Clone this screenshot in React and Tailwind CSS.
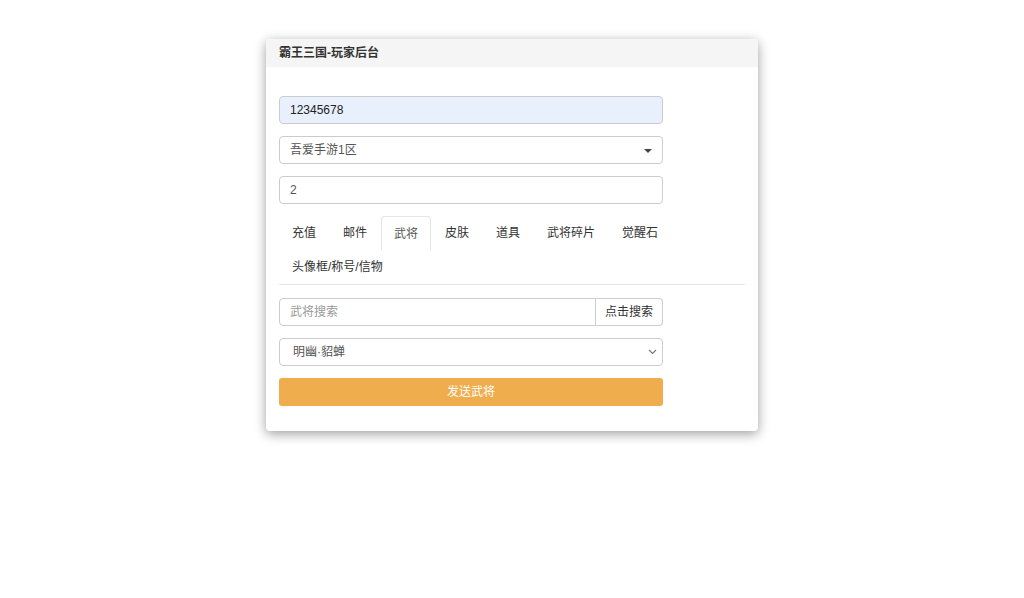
import React from "react";

const tabs = ["充值", "邮件", "武将", "皮肤", "道具", "武将碎片", "觉醒石", "头像框/称号/信物"];

export default function App() {
  return (
    <div
      className="min-h-[598px] w-full bg-white pt-[39px]"
      style={{ fontFamily: '"Liberation Sans", "Noto Sans CJK SC", sans-serif' }}
    >
      <div className="mx-auto w-[492px] overflow-hidden rounded-[4px] bg-white shadow-[0_3px_12px_rgba(0,0,0,0.38)]">
        <div className="flex h-[28px] items-center bg-[#f5f5f5] px-[13px] text-[12px] font-bold text-[#333]">
          霸王三国-玩家后台
        </div>
        <div className="px-[13px] pt-[29px] pb-[25px] text-[12px]">
          <div className="flex flex-col gap-[12px]">
            <div className="flex h-[28px] w-[384px] items-center rounded-[4px] border border-[#ccc] bg-[#e8f0fe] px-[10px] text-[#222]">
              12345678
            </div>
            <div className="relative flex h-[28px] w-[384px] items-center rounded-[4px] border border-[#ccc] bg-white px-[10px] text-[#555]">
              吾爱手游1区
              <span className="absolute right-[10px] top-[12px] h-0 w-0 border-x-[4px] border-t-[4px] border-x-transparent border-t-[#444]" />
            </div>
            <div className="flex h-[28px] w-[384px] items-center rounded-[4px] border border-[#ccc] bg-white px-[10px] text-[#555]">
              2
            </div>
          </div>

          <div className="mt-[12px] flex flex-wrap gap-x-px border-b border-[#e5e5e5]">
            {tabs.map((t) => {
              const active = t === "武将";
              return (
                <div
                  key={t}
                  className={
                    active
                      ? "flex h-[34px] items-center rounded-t-[4px] border border-b-0 border-[#e5e5e5] bg-white px-[12px] text-[#555]"
                      : "flex h-[34px] items-center px-[13px] text-[#333]"
                  }
                >
                  {t}
                </div>
              );
            })}
          </div>

          <div className="mt-[13px] flex flex-col gap-[12px]">
            <div className="flex h-[28px] w-[384px]">
              <div className="flex flex-1 items-center rounded-l-[4px] border border-[#ccc] px-[10px] text-[#999]">
                武将搜索
              </div>
              <div className="flex w-[67px] items-center justify-center rounded-r-[4px] border border-l-0 border-[#ccc] bg-white text-[#333]">
                点击搜索
              </div>
            </div>
            <div className="relative flex h-[28px] w-[384px] items-center rounded-[4px] border border-[#ccc] bg-white pl-[13px] text-[#555]">
              明幽·貂蝉
              <svg className="absolute right-[5px] top-[10px]" width="9" height="6" viewBox="0 0 9 6">
                <path d="M1 1 L4.5 4.5 L8 1" fill="none" stroke="#777" strokeWidth="1.1" />
              </svg>
            </div>
            <div className="flex h-[28px] w-[384px] items-center justify-center rounded-[3px] bg-[#f0ad4e] text-[12px] text-white">
              发送武将
            </div>
          </div>
        </div>
      </div>
    </div>
  );
}
